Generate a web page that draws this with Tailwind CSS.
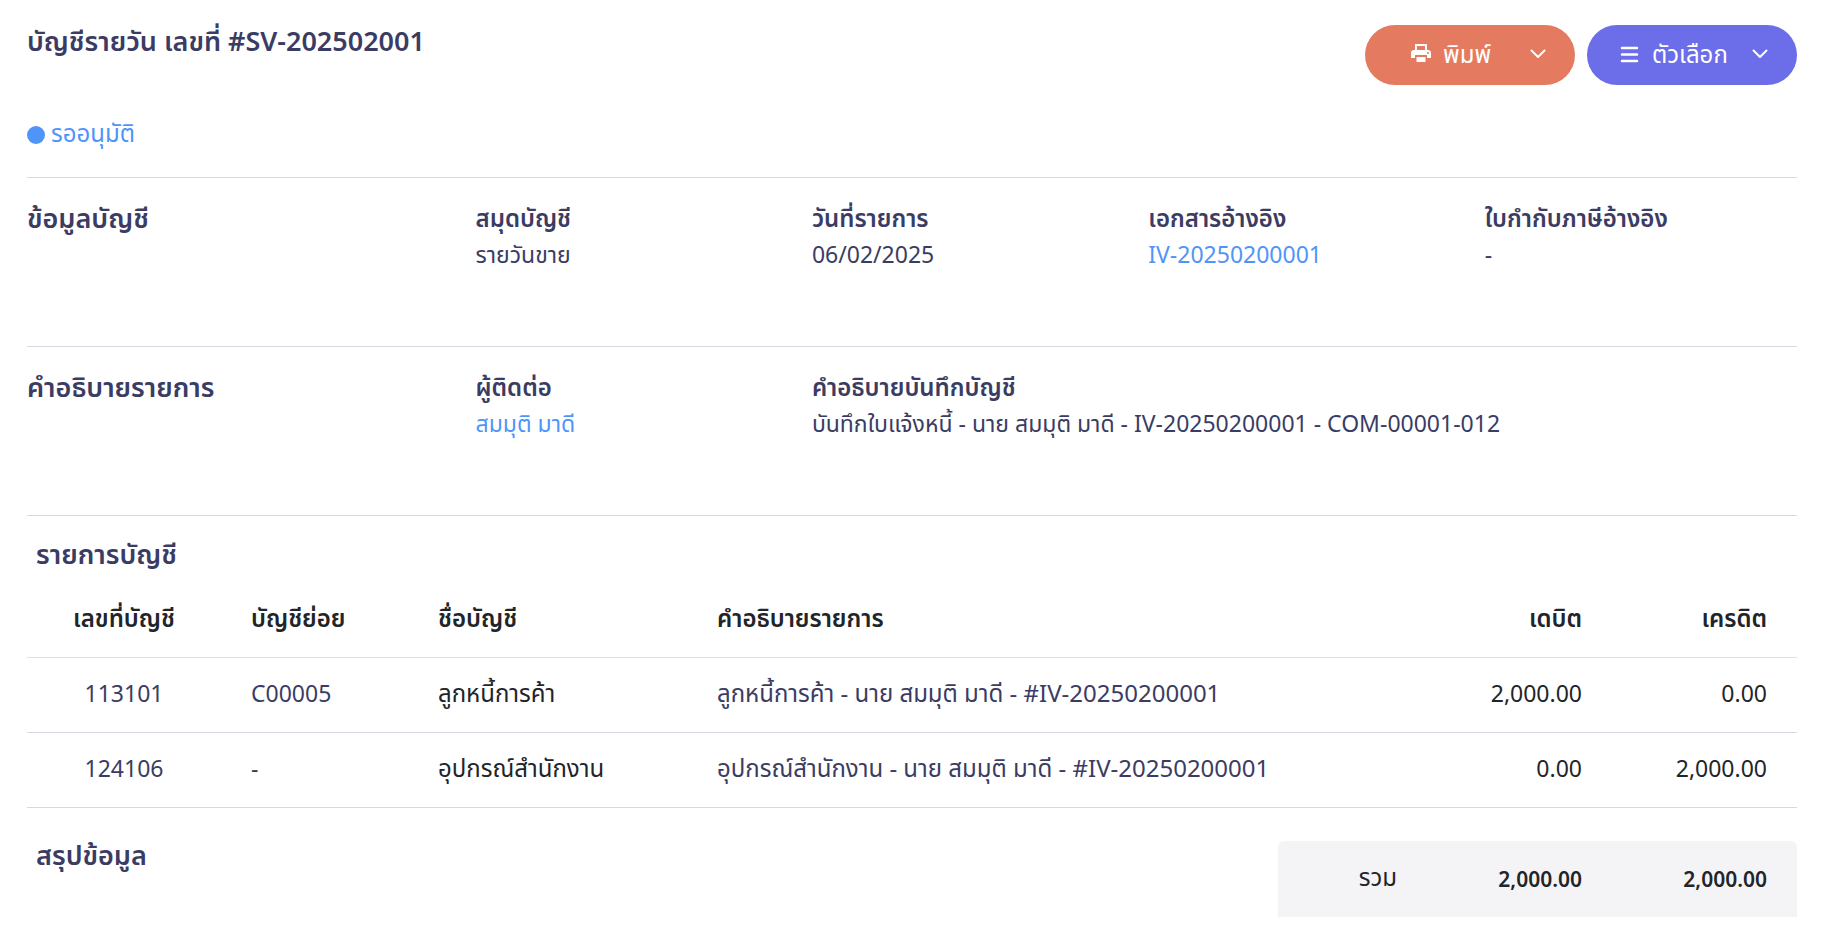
<!DOCTYPE html>
<html lang="th">
  <head>
    <meta charset="UTF-8" />
    <meta name="viewport" content="width=device-width, initial-scale=1.0" />
    <title>บัญชีรายวัน #SV-202502001</title>
    <script src="https://cdn.jsdelivr.net/npm/@tailwindcss/browser@4"></script>
  </head>
  <body
    class="bg-white text-[#3b3c63] font-['Noto_Sans','Noto_Sans_Thai',sans-serif] font-normal text-[23px] leading-9"
  >
    <main class="px-[27px] pt-[25px] pb-8">
      <!-- Encabezado -->
      <header class="flex items-start justify-between">
        <h1 class="text-[27px] leading-8 font-semibold">
          บัญชีรายวัน เลขที่ #SV-202502001
        </h1>
        <div class="flex gap-3">
          <button
            type="button"
            class="flex h-[60px] w-[210px] items-center rounded-full bg-[#e47b61] pr-7 pb-0.5 pl-[46px] text-2xl text-white"
          >
            <svg class="mr-3 size-5" viewBox="0 0 20 20" fill="currentColor">
              <path
                fill-rule="evenodd"
                d="M4 0h12v6h1a3 3 0 0 1 3 3v5h-4v-3H4v3H0V9a3 3 0 0 1 3-3h1zM6 2v4h8V2zM17 8a1 1 0 1 0 0 2 1 1 0 0 0 0-2z"
              />
              <path d="M5.500 13h9v5h-9z" />
            </svg>
            <span>พิมพ์</span>
            <svg
              class="ml-auto h-4 w-[18px]"
              viewBox="0 0 18 16"
              fill="none"
              stroke="currentColor"
              stroke-width="2"
              stroke-linecap="round"
              stroke-linejoin="round"
            >
              <path d="M2.500 4.500l6.500 6.500L15.500 4.500" />
            </svg>
          </button>
          <button
            type="button"
            class="flex h-[60px] w-[210px] items-center rounded-full bg-[#6c6de9] pr-7 pb-0.5 pl-[33px] text-2xl text-white"
          >
            <svg
              class="mr-3 size-5"
              viewBox="0 0 20 20"
              fill="none"
              stroke="currentColor"
              stroke-width="2.500"
              stroke-linecap="round"
            >
              <path d="M2 4h15M2 10.500h15M2 17h15" />
            </svg>
            <span>ตัวเลือก</span>
            <svg
              class="ml-auto h-4 w-[18px]"
              viewBox="0 0 18 16"
              fill="none"
              stroke="currentColor"
              stroke-width="2"
              stroke-linecap="round"
              stroke-linejoin="round"
            >
              <path d="M2.500 4.500l6.500 6.500L15.500 4.500" />
            </svg>
          </button>
        </div>
      </header>

      <!-- Estado -->
      <div class="mt-8 flex items-center gap-1.5 pb-6 text-2xl text-[#4f95f9]">
        <span class="size-[18px] rounded-full bg-[#4f95f9]"></span>
        <span class="pb-1 leading-8">รออนุมัติ</span>
      </div>

      <!-- Datos de la cuenta -->
      <section class="h-[169px] border-t border-[#d8d9e0] pt-[22px]">
        <div class="-mx-3 grid grid-cols-4">
          <h2 class="px-3 text-[27px] font-semibold">ข้อมูลบัญชี</h2>
          <dl class="col-span-3 grid grid-cols-4">
            <div class="px-3">
              <dt class="text-2xl leading-9 font-semibold">สมุดบัญชี</dt>
              <dd>รายวันขาย</dd>
            </div>
            <div class="px-3">
              <dt class="text-2xl leading-9 font-semibold">วันที่รายการ</dt>
              <dd>06/02/2025</dd>
            </div>
            <div class="px-3">
              <dt class="text-2xl leading-9 font-semibold">เอกสารอ้างอิง</dt>
              <dd><a href="#" class="text-[#4f95f9]">IV-20250200001</a></dd>
            </div>
            <div class="px-3">
              <dt class="text-2xl leading-9 font-semibold">ใบกำกับภาษีอ้างอิง</dt>
              <dd>-</dd>
            </div>
          </dl>
        </div>
      </section>

      <!-- Descripción -->
      <section class="h-[169px] border-t border-[#d8d9e0] pt-[22px]">
        <div class="-mx-3 grid grid-cols-4">
          <h2 class="px-3 text-[27px] font-semibold">คำอธิบายรายการ</h2>
          <dl class="col-span-3 grid grid-cols-4">
            <div class="px-3">
              <dt class="text-2xl leading-9 font-semibold">ผู้ติดต่อ</dt>
              <dd><a href="#" class="text-[#4f95f9]">สมมุติ มาดี</a></dd>
            </div>
            <div class="col-span-3 px-3">
              <dt class="text-2xl leading-9 font-semibold">คำอธิบายบันทึกบัญชี</dt>
              <dd>
                บันทึกใบแจ้งหนี้ - นาย สมมุติ มาดี - IV-20250200001 -
                COM-00001-012
              </dd>
            </div>
          </dl>
        </div>
      </section>

      <!-- Movimientos -->
      <section class="border-t border-[#d8d9e0] pt-5">
        <h2 class="px-[9px] text-[27px] font-semibold">รายการบัญชี</h2>
        <table class="mt-2 w-full table-fixed text-left">
          <colgroup>
            <col class="w-[194px]" />
            <col class="w-[187px]" />
            <col class="w-[279px]" />
            <col />
            <col class="w-[185px]" />
            <col class="w-[185px]" />
          </colgroup>
          <thead class="text-2xl text-[#212529]">
            <tr class="h-[77px] border-b border-[#dee2e6]">
              <th class="px-[30px] text-center font-semibold">เลขที่บัญชี</th>
              <th class="px-[30px] font-semibold">บัญชีย่อย</th>
              <th class="px-[30px] font-semibold">ชื่อบัญชี</th>
              <th class="px-[30px] font-semibold">คำอธิบายรายการ</th>
              <th class="px-[30px] text-right font-semibold">เดบิต</th>
              <th class="px-[30px] text-right font-semibold">เครดิต</th>
            </tr>
          </thead>
          <tbody>
            <tr class="h-[75px] border-b border-[#d8d9e0]">
              <td class="px-[30px] pb-1 text-center">113101</td>
              <td class="px-[30px] pb-1">C00005</td>
              <td class="px-[30px] pb-1 text-2xl text-[#212529]">ลูกหนี้การค้า</td>
              <td class="px-[30px] pb-1 text-2xl">
                ลูกหนี้การค้า - นาย สมมุติ มาดี - #IV-20250200001
              </td>
              <td class="px-[30px] pb-1 text-right text-[#212529]">2,000.00</td>
              <td class="px-[30px] pb-1 text-right text-[#212529]">0.00</td>
            </tr>
            <tr class="h-[75px] border-b border-[#d8d9e0]">
              <td class="px-[30px] pb-1 text-center">124106</td>
              <td class="px-[30px] pb-1">-</td>
              <td class="px-[30px] pb-1 text-2xl text-[#212529]">อุปกรณ์สำนักงาน</td>
              <td class="px-[30px] pb-1 text-2xl">
                อุปกรณ์สำนักงาน - นาย สมมุติ มาดี - #IV-20250200001
              </td>
              <td class="px-[30px] pb-1 text-right text-[#212529]">0.00</td>
              <td class="px-[30px] pb-1 text-right text-[#212529]">2,000.00</td>
            </tr>
          </tbody>
        </table>
      </section>

      <!-- Resumen -->
      <section class="flex items-start justify-between pt-[33px]">
        <h2 class="px-[9px] text-[27px] leading-7 font-semibold">สรุปข้อมูล</h2>
        <table
          class="w-[519px] table-fixed rounded-t-md bg-[#f4f4f7] text-right text-[#212529]"
        >
          <tbody>
            <tr class="h-[76px]">
              <th class="px-[30px] pb-1 text-2xl font-normal">รวม</th>
              <td class="w-[185px] px-[30px] text-[21px] font-semibold">
                2,000.00
              </td>
              <td class="w-[185px] px-[30px] text-[21px] font-semibold">
                2,000.00
              </td>
            </tr>
          </tbody>
        </table>
      </section>
    </main>
  </body>
</html>
